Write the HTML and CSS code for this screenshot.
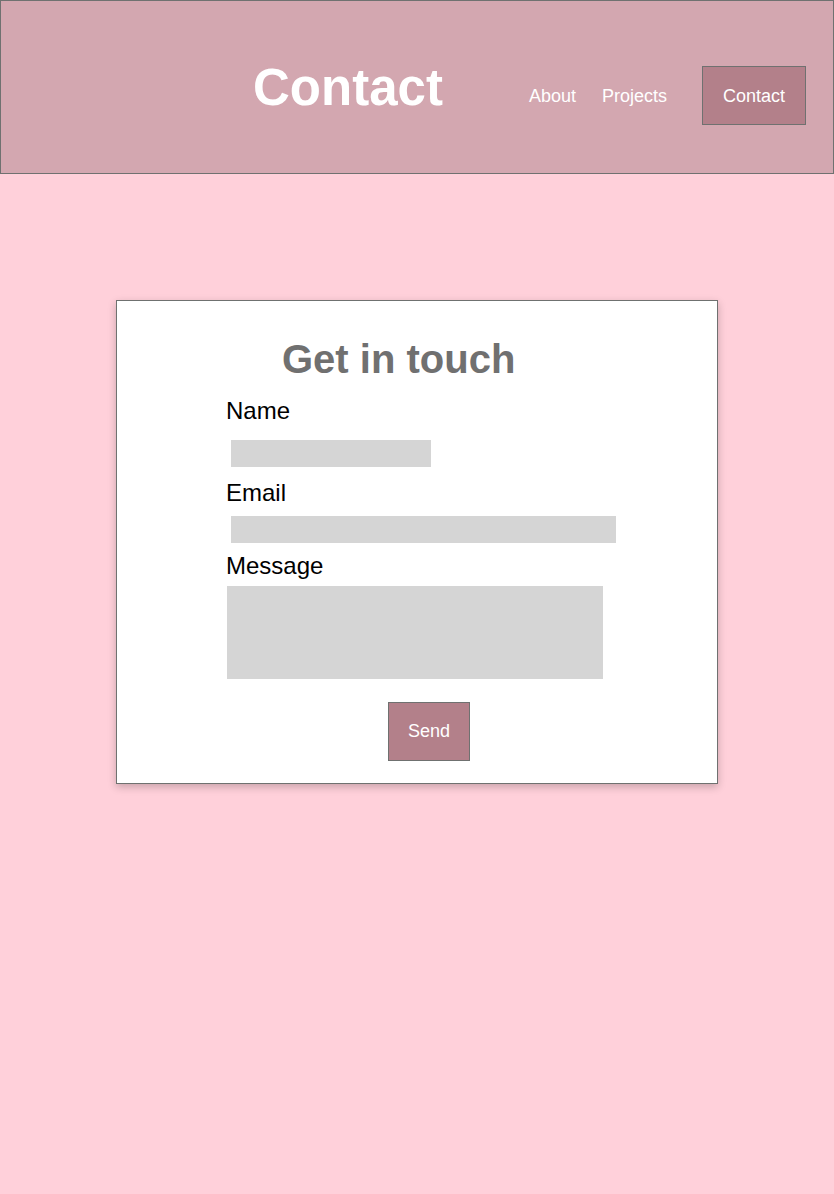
FILE: index.html
```html
<!DOCTYPE html>
<html lang="en">
<head>
<meta charset="utf-8">
<title>Contact</title>
<link rel="stylesheet" href="styles.css">
</head>
<body>
<header class="site-header">
  <h1 class="site-title">Contact</h1>
  <nav class="nav">
    <a class="nav-link" href="#">About</a>
    <a class="nav-link" href="#">Projects</a>
    <a class="nav-link nav-active" href="#">Contact</a>
  </nav>
</header>
<main class="main">
  <section class="card">
    <h2 class="card-title">Get in touch</h2>
    <form class="form">
      <label class="label label-name" for="name">Name</label>
      <input class="input input-name" id="name" type="text">
      <label class="label label-email" for="email">Email</label>
      <input class="input input-email" id="email" type="email">
      <label class="label label-message" for="message">Message</label>
      <textarea class="textarea" id="message"></textarea>
      <button class="send" type="button">Send</button>
    </form>
  </section>
</main>
</body>
</html>
```
FILE: styles.css
```css
* { box-sizing: border-box; }
html, body {
  margin: 0;
  padding: 0;
  background: #ffd0da;
  font-family: "Liberation Sans", Arial, Helvetica, sans-serif;
  height: 100%;
}
.site-header {
  height: 174px;
  background: #d3a7b0;
  border: 1px solid #6f7170;
  display: flex;
  align-items: center;
  justify-content: flex-end;
  padding-right: 27px;
}
.site-title {
  margin: 2px 86px 0 0;
  font-size: 51px;
  line-height: 50px;
  font-weight: bold;
  color: #ffffff;
}
.nav {
  display: flex;
  align-items: center;
  margin-top: 17px;
}
.nav-link {
  color: #ffffff;
  text-decoration: none;
  font-size: 18px;
  line-height: 22px;
  margin-left: 26px;
}
.nav-link:first-child { margin-left: 0; }
.nav-active {
  margin-left: 35px;
  height: 59px;
  padding: 0 20px;
  display: flex;
  align-items: center;
  background: #b3808a;
  border: 1px solid #6f7170;
}
.main {
  padding-top: 126px;
  display: flex;
  justify-content: center;
}
.card {
  width: 602px;
  height: 484px;
  background: #ffffff;
  border: 1px solid #6f7170;
  box-shadow: 0 3px 8px rgba(0, 0, 0, 0.22);
  padding: 34px 0 0 109px;
}
.card-title {
  margin: 0 0 0 56px;
  font-size: 40px;
  line-height: 48px;
  font-weight: bold;
  color: #707070;
}
.form {
  display: flex;
  flex-direction: column;
  align-items: flex-start;
}
.label {
  display: block;
  font-size: 24px;
  line-height: 28px;
  color: #000000;
}
.label-name { margin-top: 14px; }
.label-email { margin-top: 12px; }
.label-message { margin-top: 9px; }
.input {
  display: block;
  height: 27px;
  border: none;
  background: #d5d5d5;
  padding: 0;
  margin-left: 5px;
}
.input-name { width: 200px; margin-top: 15px; }
.input-email { width: 385px; margin-top: 9px; }
.textarea {
  display: block;
  width: 376px;
  height: 93px;
  margin: 6px 0 0 1px;
  border: none;
  background: #d5d5d5;
  resize: none;
  padding: 0;
}
.send {
  margin: 23px 0 0 162px;
  width: 82px;
  height: 59px;
  background: #b3808a;
  border: 1px solid #6f7170;
  color: #ffffff;
  font-family: "Liberation Sans", Arial, Helvetica, sans-serif;
  font-size: 18px;
  padding: 0;
}
```
